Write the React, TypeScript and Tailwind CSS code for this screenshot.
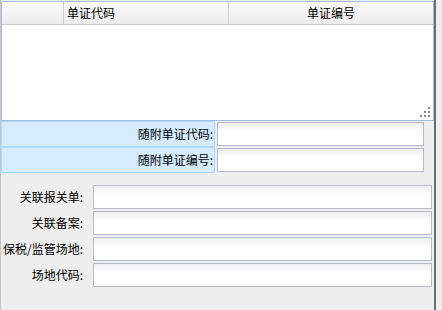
const FIELDS = ['关联报关单:', '关联备案:', '保税/监管场地:', '场地代码:']

function Input({ className = '' }: { className?: string }) {
  return (
    <div
      className={`h-[24px] border border-[#b6b8cc] bg-[linear-gradient(#eceff0,#ffffff_9px)] ${className}`}
    />
  )
}

function Grip() {
  return (
    <svg width="10" height="10" viewBox="0 0 10 10" className="absolute right-[3px] bottom-[3px]">
      <g fill="#8a8a8a">
        <rect x="8" y="0" width="2" height="2" />
        <rect x="4" y="4" width="2" height="2" />
        <rect x="8" y="4" width="2" height="2" />
        <rect x="0" y="8" width="2" height="2" />
        <rect x="4" y="8" width="2" height="2" />
        <rect x="8" y="8" width="2" height="2" />
      </g>
    </svg>
  )
}

export default function App() {
  return (
    <div
      className="w-[442px] h-[310px] bg-[#eeeeee] flex text-[12px] text-black overflow-hidden"
      style={{ fontFamily: '"Noto Sans CJK SC", "Noto Sans", sans-serif' }}
    >
      <div className="w-[436px] h-full border-l border-l-[#c4c4c4] border-r-2 border-r-[#6e6e6e] pt-px flex flex-col">
        {/* grid */}
        <div className="relative h-[120px] border border-[#a4bde2] bg-white flex flex-col">
          <div className="h-[23px] flex border-b border-[#c6c6c6] bg-[linear-gradient(#fbfbfb,#ececec)] leading-[22px]">
            <div className="w-[62px] border-r border-[#cfcfcf]" />
            <div className="w-[165px] border-r border-[#cfcfcf] pl-[3px]">单证代码</div>
            <div className="flex-1 text-center">单证编号</div>
          </div>
          <Grip />
        </div>

        {/* attached doc rows */}
        {['随附单证代码:', '随附单证编号:'].map(t => (
          <div key={t} className="h-[26px] flex items-center">
            <div className="w-[214px] h-full bg-[#d6ecfd] border border-[#acd9f8] flex items-center justify-end pr-px">
              {t}
            </div>
            <Input className="ml-[2px] w-[207px]" />
          </div>
        ))}

        {/* linked fields */}
        <div className="mt-[12px] flex flex-col gap-[2px]">
          {FIELDS.map(f => (
            <div key={f} className="h-[24px] flex items-center">
              <div className="w-[82px] text-right whitespace-nowrap">{f}</div>
              <Input className="ml-[10px] w-[339px]" />
            </div>
          ))}
        </div>
      </div>
    </div>
  )
}
